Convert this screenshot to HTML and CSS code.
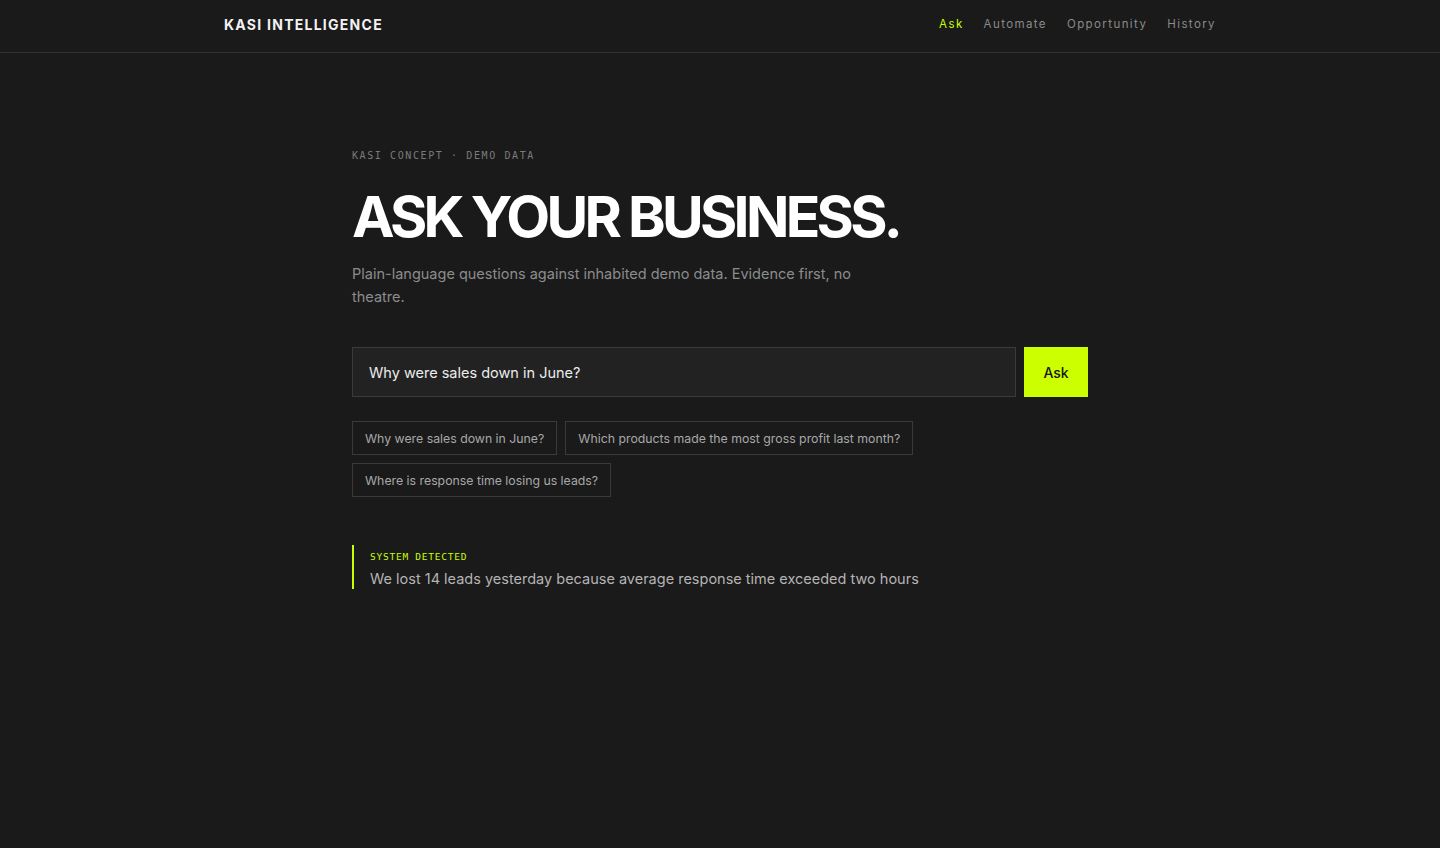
FILE: index.html
```html
<!DOCTYPE html>
<html lang="en">
<head>
<meta charset="utf-8">
<title>Kasi Intelligence — Ask</title>
<link rel="stylesheet" href="styles.css">
</head>
<body>
<header class="topbar">
  <div class="topbar-inner">
    <a class="brand" href="#">KASI INTELLIGENCE</a>
    <nav class="nav">
      <a class="nav-link active" href="#">Ask</a>
      <a class="nav-link" href="#">Automate</a>
      <a class="nav-link" href="#">Opportunity</a>
      <a class="nav-link" href="#">History</a>
    </nav>
  </div>
</header>

<main class="page">
  <p class="eyebrow">KASI CONCEPT · DEMO DATA</p>
  <h1 class="title">ASK YOUR BUSINESS.</h1>
  <p class="lede">Plain-language questions against inhabited demo data. Evidence first, no theatre.</p>

  <form class="ask-form">
    <input class="ask-input" type="text" value="Why were sales down in June?">
    <button class="ask-btn" type="button">Ask</button>
  </form>

  <div class="chips">
    <button class="chip" type="button">Why were sales down in June?</button>
    <button class="chip" type="button">Which products made the most gross profit last month?</button>
    <button class="chip" type="button">Where is response time losing us leads?</button>
  </div>

  <section class="signal">
    <p class="signal-label">SYSTEM DETECTED</p>
    <p class="signal-text">We lost 14 leads yesterday because average response time exceeded two hours</p>
  </section>
</main>
</body>
</html>
```

FILE: styles.css
```css
* { box-sizing: border-box; }

html, body {
  margin: 0;
  padding: 0;
  background: #1a1a1a;
  color: #e8e8e8;
  font-family: Inter, "Liberation Sans", sans-serif;
}

a { text-decoration: none; color: inherit; }

/* top bar */
.topbar {
  border-bottom: 1px solid #333;
  padding-bottom: 4px;
}

.topbar-inner {
  max-width: 992px;
  margin: 0 auto;
  height: 48px;
  display: flex;
  align-items: center;
  justify-content: space-between;
}

.brand {
  font-size: 14px;
  font-weight: 700;
  letter-spacing: 0.09em;
  color: #f2f2f2;
}

.nav {
  display: flex;
  gap: 20px;
}

.nav-link {
  font-size: 11.5px;
  letter-spacing: 1.4px;
  color: #8a8a8a;
}

.nav-link.active { color: #c8ff00; }

/* main column */
.page {
  width: 736px;
  margin: 0 auto;
  padding-top: 96px;
}

.eyebrow {
  margin: 0;
  font-family: "DejaVu Sans Mono", "Liberation Mono", monospace;
  font-size: 10px;
  letter-spacing: 1.6px;
  color: #7a7a7a;
  line-height: 14px;
}

.title {
  margin: 22px 0 0;
  font-size: 57px;
  line-height: 64px;
  font-weight: 700;
  letter-spacing: -0.065em;
  color: #ffffff;
}

.lede {
  margin: 13px 0 0;
  max-width: 520px;
  font-size: 14.5px;
  line-height: 23px;
  color: #8c8c8c;
}

/* question input */
.ask-form {
  display: flex;
  gap: 8px;
  margin-top: 39px;
}

.ask-input {
  flex: 1;
  height: 50px;
  padding: 0 16px;
  background: #222;
  border: 1px solid #3b3b3b;
  color: #ececec;
  font-family: inherit;
  font-size: 14.5px;
  outline: none;
  border-radius: 0;
}

.ask-btn {
  width: 64px;
  height: 50px;
  border: 0;
  border-radius: 0;
  background: #ccff00;
  color: #161616;
  font-family: inherit;
  font-size: 14px;
  font-weight: 500;
}

/* suggested questions */
.chips {
  display: flex;
  flex-wrap: wrap;
  gap: 8px;
  margin-top: 24px;
  max-width: 600px;
}

.chip {
  height: 34px;
  padding: 0 12px;
  background: transparent;
  border: 1px solid #3a3a3a;
  border-radius: 0;
  color: #a8a8a8;
  font-family: inherit;
  font-size: 12.3px;
}

/* detected signal */
.signal {
  margin-top: 48px;
  border-left: 2px solid #c8ff00;
  padding: 5px 0 0 16px;
  height: 44px;
}

.signal-label {
  margin: 0;
  font-family: "DejaVu Sans Mono", "Liberation Mono", monospace;
  font-size: 9.5px;
  letter-spacing: 0.08em;
  line-height: 14px;
  color: #c8ff00;
}

.signal-text {
  margin: 5px 0 0;
  font-size: 14.5px;
  line-height: 20px;
  color: #b4b4b4;
}
```
